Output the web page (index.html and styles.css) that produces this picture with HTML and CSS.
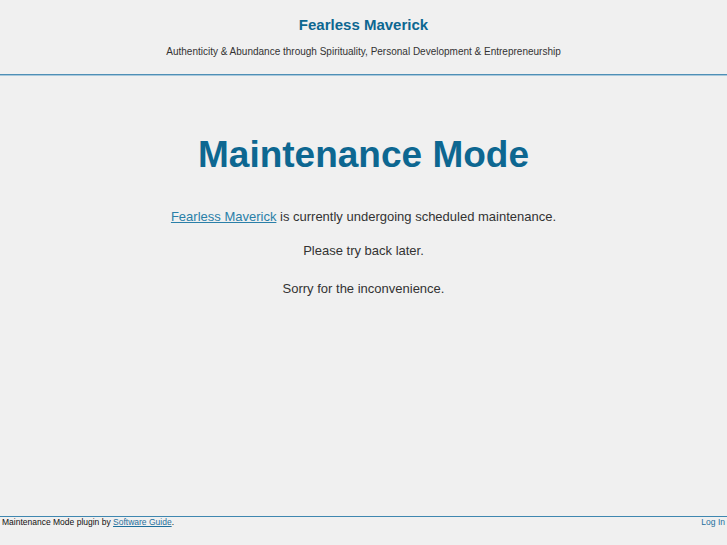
FILE: index.html
```html
<!DOCTYPE html>
<html>
<head>
<meta charset="utf-8">
<title>Fearless Maverick - Maintenance Mode</title>
<link rel="stylesheet" href="styles.css">
</head>
<body>
<div class="page">
  <header class="header">
    <div class="site-title">Fearless Maverick</div>
    <div class="tagline">Authenticity &amp; Abundance through Spirituality, Personal Development &amp; Entrepreneurship</div>
  </header>
  <main class="content">
    <h1 class="heading">Maintenance Mode</h1>
    <p class="msg msg-first"><a href="#">Fearless Maverick</a> is currently undergoing scheduled maintenance.</p>
    <p class="msg msg-second">Please try back later.</p>
    <p class="msg msg-third">Sorry for the inconvenience.</p>
  </main>
  <footer class="footer">
    <span class="credit">Maintenance Mode plugin by <a href="#">Software Guide</a>.</span>
    <a class="login" href="#">Log In</a>
  </footer>
</div>
</body>
</html>
```
FILE: styles.css
```css
html, body {
  margin: 0;
  padding: 0;
  background: #f0f0f0;
}
body {
  font-family: "Liberation Sans", Arial, sans-serif;
  color: #333333;
}
.page {
  min-height: 100vh;
  display: flex;
  flex-direction: column;
}
.header {
  text-align: center;
  border-bottom: 1px solid #4f8fb6;
  box-shadow: 0 1px 0 #a9c9dc;
  padding: 16px 0 16px;
}
.site-title {
  font-size: 15px;
  font-weight: bold;
  color: #0d6791;
  line-height: 17px;
}
.tagline {
  font-size: 10px;
  color: #333;
  line-height: 12px;
  margin-top: 13px;
}
.content {
  flex: 1;
  text-align: center;
}
.heading {
  font-size: 37px;
  font-weight: bold;
  color: #0d6791;
  margin: 58px 0 0;
  line-height: 44px;
}
.msg {
  font-size: 13px;
  margin: 0;
  line-height: 16px;
}
.msg-first { margin-top: 32px; }
.msg-second { margin-top: 18px; }
.msg-third { margin-top: 22px; }
.msg a {
  color: #2a7fa8;
}
.footer {
  border-top: 1px solid #3f87b0;
  display: flex;
  justify-content: space-between;
  font-size: 8.5px;
  line-height: 11px;
  padding: 0 2px 17px;
  color: #111;
}
.footer a {
  color: #1e6f9c;
}
.login {
  text-decoration: none;
}
```
